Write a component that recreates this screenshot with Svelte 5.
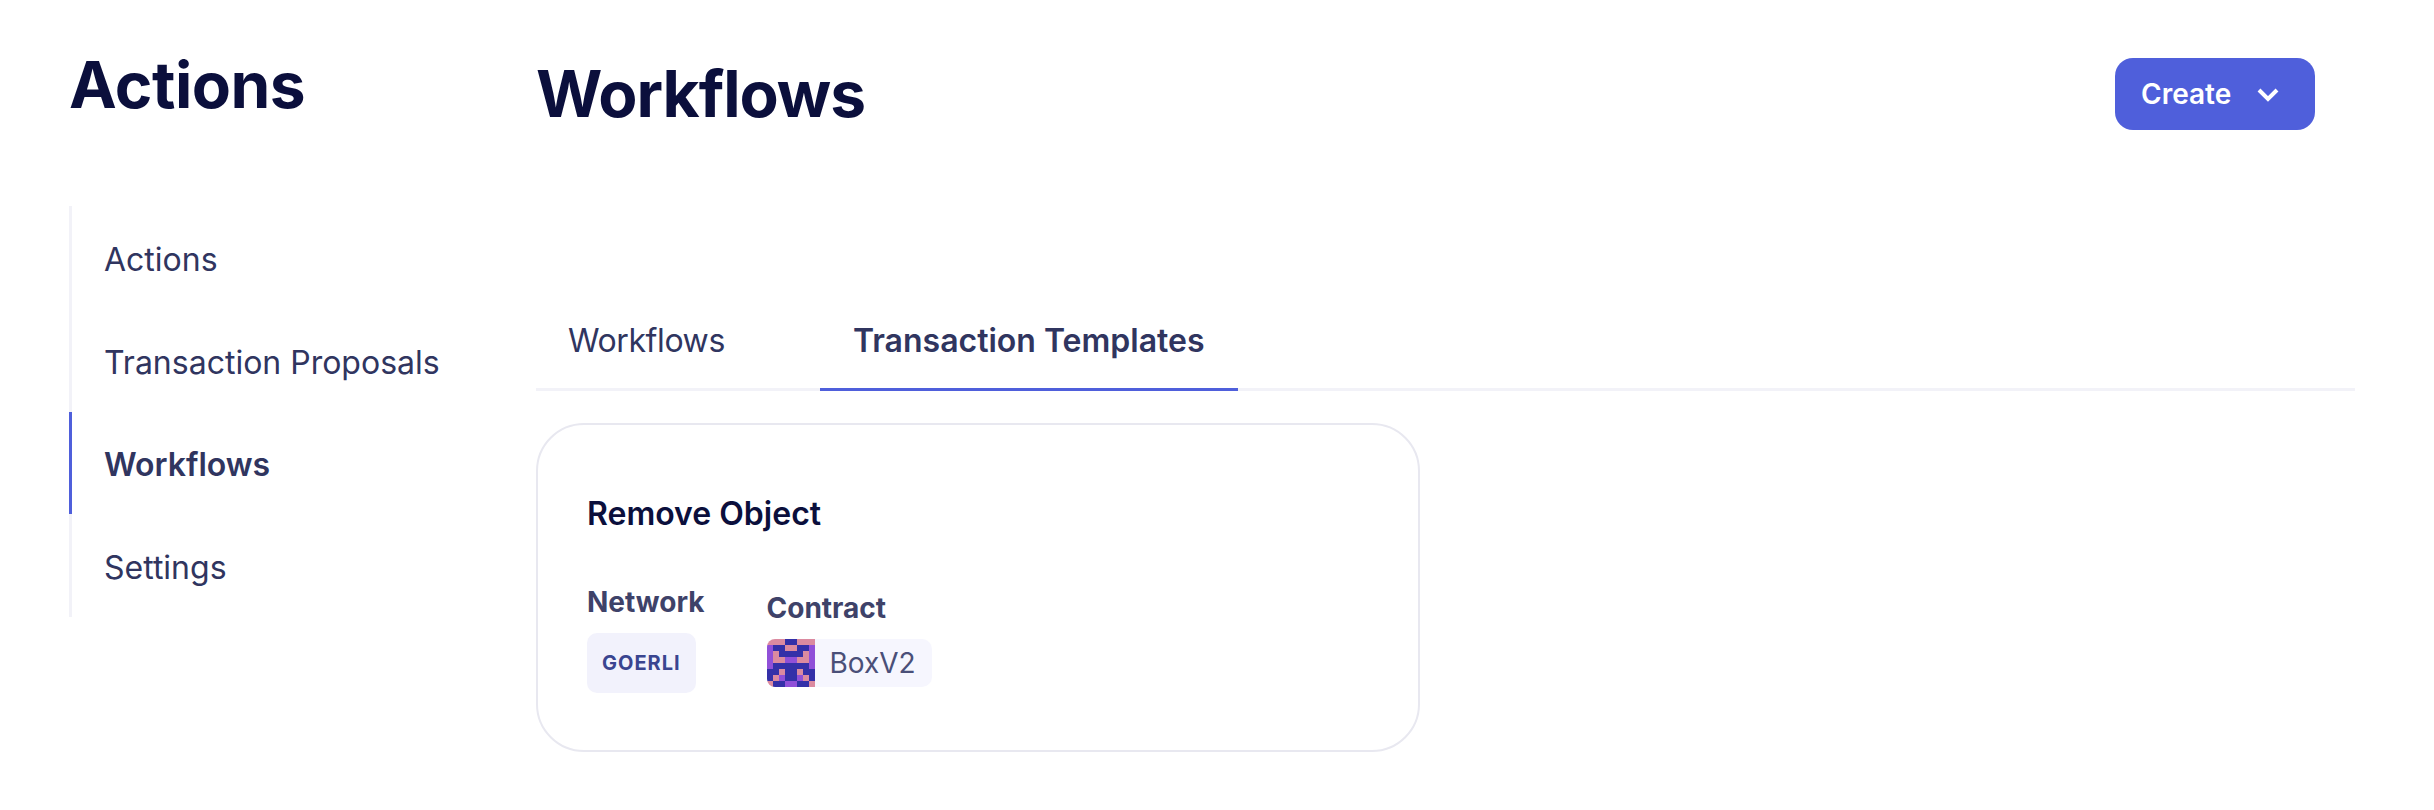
<script>
  const navItems = [
    { label: 'Actions' },
    { label: 'Transaction Proposals' },
    { label: 'Workflows', active: true },
    { label: 'Settings' },
  ];

  const tabs = [
    { label: 'Workflows' },
    { label: 'Transaction Templates', active: true },
  ];

  // blockies-style avatar, p = pink, b = blue, u = purple
  const avatar = [
    'pppbbppp',
    'ubbppbbu',
    'upbbbbpu',
    'uppuuppu',
    'ubbbbbbu',
    'bbpbbpbb',
    'bpubbupb',
    'pbbuubbp',
  ];
  const cells = avatar.join('').split('');
</script>

<div class="page">
  <aside class="sidebar">
    <h1 class="sidebar-title">Actions</h1>
    <nav class="nav">
      {#each navItems as item}
        <div class="nav-item" class:active={item.active}>{item.label}</div>
      {/each}
    </nav>
  </aside>

  <main class="main">
    <header class="header">
      <h1 class="title">Workflows</h1>
      <button class="create">
        <span>Create</span>
        <svg width="22" height="15" viewBox="0 0 22 15" fill="none">
          <path d="M2 3l9 9 9-9" stroke="currentColor" stroke-width="4" />
        </svg>
      </button>
    </header>

    <div class="tabs">
      {#each tabs as tab}
        <div class="tab" class:active={tab.active}>{tab.label}</div>
      {/each}
    </div>

    <section class="card">
      <h2 class="card-title">Remove Object</h2>
      <div class="meta">
        <div class="field">
          <div class="field-label">Network</div>
          <span class="network">GOERLI</span>
        </div>
        <div class="field">
          <div class="field-label">Contract</div>
          <div class="contract">
            <div class="avatar">
              {#each cells as c}
                <i class={c}></i>
              {/each}
            </div>
            <span class="contract-name">BoxV2</span>
          </div>
        </div>
      </div>
    </section>
  </main>
</div>

<style>
  :global(body) {
    margin: 0;
    background: #fff;
    font-family: Inter, 'Liberation Sans', sans-serif;
  }

  .page {
    display: flex;
    height: 810px;
    overflow: hidden;
  }

  .sidebar {
    width: 467px;
    margin-left: 69px;
    flex-shrink: 0;
  }

  .sidebar-title {
    margin: 45px 0 81px;
    font-size: 64px;
    line-height: 80px;
    font-weight: 700;
    letter-spacing: -0.5px;
    color: #0b0f3c;
  }

  .nav {
    width: 400px;
    border-left: 3px solid #f2f2f8;
  }

  .nav-item {
    height: 102.75px;
    display: flex;
    align-items: center;
    margin-left: -3px;
    padding: 4px 0 0 32px;
    box-sizing: border-box;
    border-left: 3px solid transparent;
    font-size: 32px;
    color: #30355f;
  }

  .nav-item.active {
    border-left-color: #4f5fdb;
    font-weight: 600;
  }

  .main {
    width: 1819px;
    display: flex;
    flex-direction: column;
  }

  .header {
    display: flex;
    justify-content: space-between;
    align-items: center;
    height: 72px;
    margin-top: 58px;
    padding-right: 40px;
  }

  .title {
    margin: 0;
    font-size: 64px;
    line-height: 80px;
    font-weight: 700;
    letter-spacing: -1px;
    color: #0b0f3c;
  }

  .create {
    width: 200px;
    height: 72px;
    display: flex;
    align-items: center;
    gap: 26px;
    padding: 0 0 0 26px;
    border: 0;
    border-radius: 18px;
    background: #4f5fdb;
    color: #fff;
    font-family: inherit;
    font-size: 28px;
    font-weight: 600;
  }

  .tabs {
    display: flex;
    gap: 63px;
    margin-top: 181px;
    height: 77px;
    padding-left: 0;
    border-bottom: 3px solid #f2f2f8;
  }

  .tab {
    height: 80px;
    margin-left: -1px;
    padding: 0 33px 22px;
    box-sizing: border-box;
    display: flex;
    align-items: center;
    font-size: 32px;
    letter-spacing: -0.4px;
    color: #30355f;
  }

  .tab.active {
    padding-bottom: 19px;
    font-weight: 600;
    letter-spacing: 0;
    border-bottom: 3px solid #4f5fdb;
  }

  .card {
    width: 884px;
    height: 329px;
    box-sizing: border-box;
    margin-top: 32px;
    padding: 0 49px;
    border: 2px solid #e8e8f0;
    border-radius: 48px;
  }

  .card-title {
    margin: 67px 0 0;
    font-size: 32px;
    line-height: 44px;
    font-weight: 600;
    color: #0b0f3c;
  }

  .meta {
    display: flex;
    align-items: center;
    gap: 62px;
    margin-top: 48px;
  }

  .field-label {
    font-size: 28px;
    line-height: 36px;
    font-weight: 700;
    color: #3e4269;
  }

  .network {
    display: inline-flex;
    align-items: center;
    height: 60px;
    margin-top: 13px;
    padding: 0 15px;
    border-radius: 10px;
    background: #f2f2fc;
    color: #3a4590;
    font-size: 20px;
    font-weight: 700;
    letter-spacing: 1px;
  }

  .contract {
    display: inline-flex;
    align-items: center;
    height: 48px;
    margin-top: 13px;
    border-radius: 10px;
    background: #f6f6fe;
  }

  .avatar {
    width: 48px;
    height: 48px;
    display: grid;
    grid-template-columns: repeat(8, 6px);
    grid-auto-rows: 6px;
    border-radius: 8px 0 0 8px;
    overflow: hidden;
  }

  .avatar .p { background: #db8aa0; }
  .avatar .b { background: #3430a8; }
  .avatar .u { background: #9050d8; }

  .contract-name {
    padding: 0 16px 0 15px;
    font-size: 28px;
    color: #4a4f78;
  }
</style>
